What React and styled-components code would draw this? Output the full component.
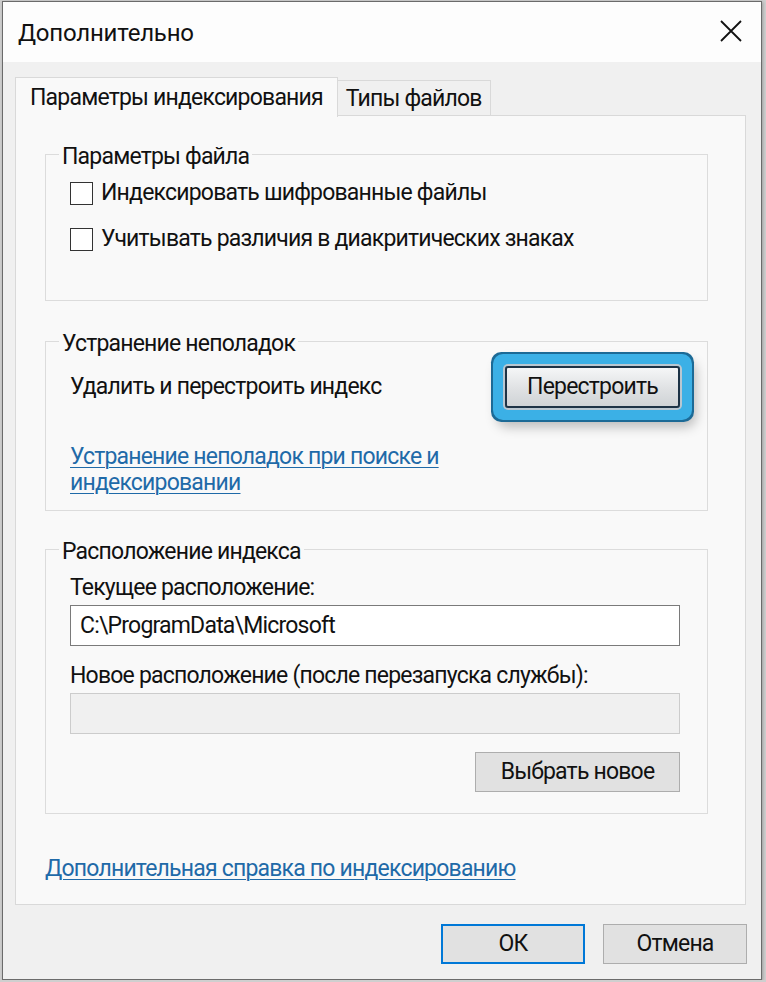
import React from "react";
import styled, { createGlobalStyle } from "styled-components";

const GlobalStyle = createGlobalStyle`
  html, body { margin: 0; padding: 0; }
  body {
    background: #cfcfcf;
    font-family: Roboto, "Noto Sans", sans-serif;
    font-size: 23px;
    letter-spacing: -0.8px;
    color: #111;
  }
  * { box-sizing: border-box; }
`;

const Window = styled.div`
  margin: 1px 0 0 2px;
  width: 760px;
  height: 979px;
  border: 1px solid #6b6b6b;
  background: #f0f0f0;
  display: flex;
  flex-direction: column;
  box-shadow: 1px 1px 3px rgba(0,0,0,0.25);
`;

const TitleBar = styled.div`
  height: 60px;
  background: #fdfdfd;
  display: flex;
  align-items: center;
  justify-content: space-between;
  padding: 0 18px 0 15px;
  flex: none;
`;

const Title = styled.div`
  font-size: 24px;
  letter-spacing: -0.2px;
  line-height: 26px;
  padding-top: 2px;
  color: #111;
`;

const CloseButton = styled.div`
  width: 24px;
  height: 24px;
  display: flex;
  align-items: center;
  justify-content: center;
  margin-top: -2px;
`;

const Body = styled.div`
  flex: 1;
  display: flex;
  flex-direction: column;
  padding: 15px 14px 16px 12px;
`;

const TabStrip = styled.div`
  display: flex;
  align-items: flex-end;
  height: 39px;
  margin-right: 1px;
  position: relative;
  z-index: 1;
  margin-bottom: -1px;
`;

const Tab = styled.div`
  height: ${(p) => (p.$active ? "40px" : "36px")};
  padding: ${(p) => (p.$active ? "0 14px" : "0 8px")};
  display: flex;
  align-items: center;
  background: ${(p) => (p.$active ? "#f9f9f9" : "#f0f0f0")};
  border: 1px solid #d9d9d9;
  border-bottom: ${(p) => (p.$active ? "none" : "1px solid #d9d9d9")};
  border-left: ${(p) => (p.$last ? "none" : "1px solid #d9d9d9")};
  line-height: 26px;
  white-space: nowrap;
  margin-bottom: ${(p) => (p.$active ? "-1px" : "0")};
  padding-top: ${(p) => (p.$active ? "0" : "2px")};
`;

const Panel = styled.div`
  margin-right: 1px;
  background: #f9f9f9;
  border: 1px solid #d9d9d9;
  padding: 22px 37px 22px 29px;
  display: flex;
  flex-direction: column;
`;

const Group = styled.fieldset`
  margin: 0;
  margin-top: ${(p) => p.$gap || 0}px;
  min-width: 0;
  border: 1px solid #dcdcdc;
  padding: ${(p) => p.$pad};
  display: flex;
  flex-direction: column;
`;

const Legend = styled.legend`
  margin-left: -11px;
  padding: 6px 3px 0;
  line-height: 26px;
  color: #111;
`;

const CheckRow = styled.label`
  display: flex;
  align-items: center;
  gap: 8px;
  height: 26px;
  line-height: 26px;
  margin-top: ${(p) => p.$gap || 0}px;
  white-space: nowrap;
`;

const Box = styled.span`
  width: 23px;
  height: 23px;
  border: 1px solid #333;
  background: #fff;
  flex: none;
`;

const ActionRow = styled.div`
  display: flex;
  align-items: center;
  justify-content: space-between;
  height: 42px;
  line-height: 26px;
`;

const Link = styled.a`
  color: #1f6aa8;
  text-decoration: underline;
  text-underline-offset: 3px;
  text-decoration-thickness: 1px;
  line-height: 26px;
  display: block;
  margin-top: ${(p) => p.$gap || 0}px;
  cursor: pointer;
  max-width: ${(p) => p.$max || "none"};
`;

const Button = styled.button`
  font: inherit;
  letter-spacing: inherit;
  color: #111;
  width: ${(p) => p.$w}px;
  height: ${(p) => p.$h}px;
  background: #e1e1e1;
  border: ${(p) => (p.$default ? "2px solid #0078d7" : "1px solid #adadad")};
  display: flex;
  align-items: center;
  justify-content: center;
  padding: 0;
  line-height: 26px;
  flex: none;
`;

const RebuildButton = styled(Button)`
  border: 2px solid #1d3346;
  border-radius: 3px;
  background: linear-gradient(#f5f6f7, #dfe1e3 55%, #cfd3d6);
  box-shadow:
    0 0 0 2px #b9c7d1,
    0 0 0 12px #3bb0e6,
    0 0 0 14px #1c6a96,
    4px 7px 12px 12px rgba(0, 0, 0, 0.25);
`;

const FieldLabel = styled.div`
  line-height: 26px;
  margin-top: ${(p) => p.$gap || 0}px;
  white-space: nowrap;
`;

const Input = styled.div`
  margin-top: 4px;
  height: 41px;
  border: 1px solid ${(p) => (p.$disabled ? "#cccccc" : "#7a7a7a")};
  background: ${(p) => (p.$disabled ? "#f0f0f0" : "#ffffff")};
  display: flex;
  align-items: center;
  padding: 0 9px;
  line-height: 26px;
  white-space: nowrap;
`;

const RightRow = styled.div`
  display: flex;
  justify-content: flex-end;
  margin-top: ${(p) => p.$gap || 0}px;
`;

const Footer = styled.div`
  display: flex;
  justify-content: flex-end;
  gap: 18px;
  margin-top: 19px;
`;

export default function App() {
  return (
    <>
      <GlobalStyle />
      <Window>
        <TitleBar>
          <Title>Дополнительно</Title>
          <CloseButton>
            <svg width="22" height="22" viewBox="0 0 22 22">
              <path d="M1 1 L21 21 M21 1 L1 21" stroke="#111" strokeWidth="1.8" fill="none" />
            </svg>
          </CloseButton>
        </TitleBar>
        <Body>
          <TabStrip>
            <Tab $active>Параметры индексирования</Tab>
            <Tab $last>Типы файлов</Tab>
          </TabStrip>
          <Panel>
            <Group $pad="10px 27px 48px 24px">
              <Legend>Параметры файла</Legend>
              <CheckRow>
                <Box />
                Индексировать шифрованные файлы
              </CheckRow>
              <CheckRow $gap={20}>
                <Box />
                Учитывать различия в диакритических знаках
              </CheckRow>
            </Group>
            <Group $gap={24} $pad="9px 27px 14px 24px">
              <Legend>Устранение неполадок</Legend>
              <ActionRow>
                <span>Удалить и перестроить индекс</span>
                <RebuildButton $w={175} $h={42}>Перестроить</RebuildButton>
              </ActionRow>
              <Link $gap={36} $max="400px">
                Устранение неполадок при поиске и индексировании
              </Link>
            </Group>
            <Group $gap={22} $pad="10px 27px 21px 24px">
              <Legend>Расположение индекса</Legend>
              <FieldLabel>Текущее расположение:</FieldLabel>
              <Input>C:\ProgramData\Microsoft</Input>
              <FieldLabel $gap={17}>Новое расположение (после перезапуска службы):</FieldLabel>
              <Input $disabled />
              <RightRow $gap={18}>
                <Button $w={205} $h={40}>Выбрать новое</Button>
              </RightRow>
            </Group>
            <Link $gap={42}>Дополнительная справка по индексированию</Link>
          </Panel>
          <Footer>
            <Button $w={144} $h={40} $default>ОК</Button>
            <Button $w={144} $h={40}>Отмена</Button>
          </Footer>
        </Body>
      </Window>
    </>
  );
}
